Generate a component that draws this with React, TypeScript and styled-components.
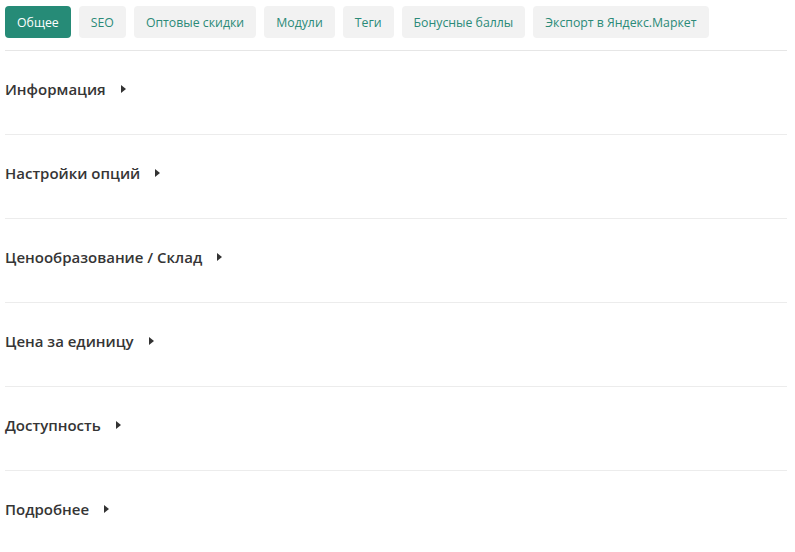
import React from "react";
import styled, { createGlobalStyle } from "styled-components";

const Global = createGlobalStyle`
  html, body { margin: 0; padding: 0; background: #fff; }
  body { font-family: "Open Sans", "Noto Sans", sans-serif; }
`;

const Page = styled.div`
  padding: 6px 8px 0 5px;
`;

const Tabs = styled.div`
  display: flex;
  gap: 8px;
  padding-bottom: 12px;
  border-bottom: 1px solid #e6e6e6;
`;

const Tab = styled.button<{ $active?: boolean }>`
  height: 32px;
  padding: 0 12px;
  border: none;
  border-radius: 4px;
  font-family: "Open Sans", sans-serif;
  font-size: 12.3px;
  background: ${(p) => (p.$active ? "#268b77" : "#f2f2f2")};
  color: ${(p) => (p.$active ? "#ffffff" : "#2b8a78")};
  cursor: pointer;
`;

const Section = styled.div`
  height: 83px;
  border-bottom: 1px solid #ececec;
  display: flex;
  align-items: center;
  &:last-child { border-bottom: none; }
`;

const Heading = styled.h4`
  margin: 0;
  display: flex;
  align-items: center;
  gap: 15px;
  font-size: 15px;
  font-weight: 600;
  color: #353535;
  line-height: 20px;
  transform: translateY(-4px);
`;

const Caret = () => (
  <svg width="5" height="8" viewBox="0 0 5 8">
    <path d="M0 0 L5 4 L0 8 Z" fill="#333" />
  </svg>
);

const tabs = [
  "Общее",
  "SEO",
  "Оптовые скидки",
  "Модули",
  "Теги",
  "Бонусные баллы",
  "Экспорт в Яндекс.Маркет",
];

const sections = [
  "Информация",
  "Настройки опций",
  "Ценообразование / Склад",
  "Цена за единицу",
  "Доступность",
  "Подробнее",
];

export default function App() {
  return (
    <Page>
      <Global />
      <Tabs>
        {tabs.map((t, i) => (
          <Tab key={t} $active={i === 0}>
            {t}
          </Tab>
        ))}
      </Tabs>
      {sections.map((s) => (
        <Section key={s}>
          <Heading>
            {s}
            <Caret />
          </Heading>
        </Section>
      ))}
    </Page>
  );
}
